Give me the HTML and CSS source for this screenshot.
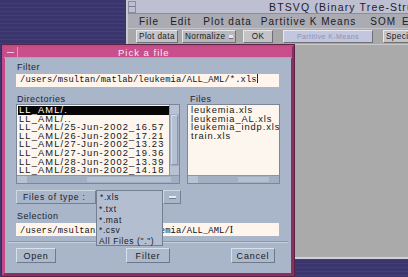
FILE: index.html
```html
<!DOCTYPE html>
<html lang="en">
<head>
    <meta charset="UTF-8">
    <title>Pick a file</title>
    <link rel="stylesheet" href="styles.css">
</head>
<body>
<div class="desk">
    <!-- back window -->
    <div class="win back">
        <div class="wtitle">
            <span class="wmenu"><i></i></span>
            <span class="wtext">BTSVQ (Binary Tree-Structured Vector Quantization)</span>
        </div>
        <div class="menubar">
            <span>File</span><span>Edit</span><span>Plot data</span><span>Partitive K Means</span><span>SOM</span><span>ETC</span>
        </div>
        <div class="toolbar">
            <span class="btn">Plot data</span>
            <span class="btn opt">Normalize <i></i></span>
            <span class="btn ok">OK</span>
            <span class="btn off">Partitive K-Means</span>
            <span class="btn">Special</span>
        </div>
        <div class="canvas"></div>
    </div>

    <!-- file dialog -->
    <div class="win dlg">
        <div class="dtitle">
            <span class="dmenu"><i></i></span>
            <span class="dtext">Pick a file</span>
        </div>
        <div class="dbody">
            <div class="lbl">Filter</div>
            <div class="field">/users/msultan/matlab/leukemia/ALL_AML/*.xls<b class="caret"></b></div>

            <div class="lists">
                <div class="col dirs">
                    <div class="lbl">Directories</div>
                    <div class="box">
                        <div class="rows">
                            <ul>
                                <li class="sel">LL_AML/.</li>
                                <li>LL_AML/..</li>
                                <li>LL_AML/25-Jun-2002_16.57</li>
                                <li>LL_AML/26-Jun-2002_17.21</li>
                                <li>LL_AML/27-Jun-2002_13.23</li>
                                <li>LL_AML/27-Jun-2002_19.36</li>
                                <li>LL_AML/28-Jun-2002_13.39</li>
                                <li>LL_AML/28-Jun-2002_14.18</li>
                            </ul>
                            <div class="vscroll"><span class="up"></span><span class="thumb"></span><span class="down"></span></div>
                        </div>
                        <div class="hscroll"><span class="left"></span><span class="thumb"></span></div>
                    </div>
                </div>
                <div class="col files">
                    <div class="lbl">Files</div>
                    <div class="box">
                        <div class="rows">
                            <ul>
                                <li>leukemia.xls</li>
                                <li>leukemia_AL.xls</li>
                                <li>leukemia_indp.xls</li>
                                <li>train.xls</li>
                            </ul>
                        </div>
                        <div class="hscroll"><span class="left"></span><span class="thumb"></span></div>
                    </div>
                </div>
            </div>

            <div class="typerow">
                <span class="typelbl">Files of type :</span>
                <span class="typesel">*.xls</span>
                <span class="typebtn"><i></i></span>
                <ul class="popup">
                    <li>*.txt</li>
                    <li>*.mat</li>
                    <li>*.csv</li>
                    <li>All Files (".")</li>
                </ul>
            </div>

            <div class="lbl sellbl">Selection</div>
            <div class="field">/users/msultan/matlab/leukemia/ALL_AML/<b class="ibeam">I</b></div>

            <div class="sep"></div>
            <div class="buttons">
                <span class="btn open">Open</span>
                <span class="btn filt">Filter</span>
                <span class="btn cancel">Cancel</span>
            </div>
        </div>
    </div>
</div>
</body>
</html>
```

FILE: styles.css
```css
html, body{
    margin: 0;
    padding: 0;
}
body{
    width: 408px;
    height: 277px;
    overflow: hidden;
    font-family: "Liberation Sans", "DejaVu Sans", sans-serif;
}
.desk{
    position: relative;
    width: 408px;
    height: 277px;
    background-color: #3a356c;
    background-image: repeating-linear-gradient(180deg, #3a356c 0, #3a356c 3px, #423d77 3px, #423d77 4px);
}
.win{
    position: absolute;
    box-sizing: border-box;
}

/* back window */
.back{
    left: 126px;
    top: 0;
    width: 300px;
    height: 259px;
    background: #aaaaaa;
    border-left: 2px solid #c8c8d4;
    border-bottom: 2px solid #d0d0dc;
    overflow: hidden;
}
.wtitle{
    height: 13px;
    display: flex;
    align-items: center;
    background: #bebfd0;
    border-bottom: 1px solid #8c8ca0;
}
.wmenu{
    width: 12px;
    height: 12px;
    box-sizing: border-box;
    border: 1px solid #8c8ca0;
    display: flex;
    align-items: center;
    justify-content: center;
}
.wmenu i{
    width: 6px;
    height: 1px;
    background: #7a7a8c;
}
.wtext{
    margin-left: 133px;
    font-size: 10.5px;
    letter-spacing: 1.15px;
    color: #1c1c2c;
    white-space: nowrap;
}
.menubar{
    height: 14px;
    display: flex;
    align-items: center;
    background: #ababb3;
    border-bottom: 1px solid #c4c4cc;
    font-size: 10px;
    letter-spacing: 1px;
    color: #202020;
    white-space: nowrap;
}
.menubar span{
    margin-left: 11px;
}
.menubar span:nth-child(3){
    margin-left: 12px;
}
.menubar span:nth-child(4){
    margin-left: 9px;
}
.menubar span:nth-child(5){
    margin-left: 14px;
}
.menubar span:nth-child(6){
    margin-left: 6px;
}
.toolbar{
    height: 15px;
    display: flex;
    align-items: center;
    padding-left: 8px;
    background: #a8a8a8;
    border-bottom: 1px solid #c8c8c8;
    white-space: nowrap;
}
.btn{
    display: inline-flex;
    align-items: center;
    height: 13px;
    padding: 0 2px;
    box-sizing: border-box;
    font-size: 8.2px;
    letter-spacing: 0.4px;
    color: #1a1a1a;
    background: #c4c4c8;
    border: 1px solid;
    border-color: #e8e8ec #6e6e74 #6e6e74 #e8e8ec;
}
.toolbar .btn:first-child{
    width: 42px;
    padding: 0 1px;
    justify-content: center;
}
.opt{
    width: 54px;
    margin-left: 4px;
    background: #b8b8bc;
}
.opt i{
    margin-left: 4px;
    width: 8px;
    height: 3px;
    background: #e8e8ec;
    border-bottom: 1px solid #6e6e74;
}
.ok{
    width: 30px;
    justify-content: center;
    margin-left: 7px;
}
.off{
    width: 90px;
    margin-left: 10px;
    justify-content: center;
    color: #8e94b4;
    background: #c2c6de;
    font-size: 7px;
}
.toolbar .btn:last-child{
    margin-left: 10px;
}
.canvas{
    height: 214px;
    background: #aaaaaa;
}

/* dialog */
.dlg{
    left: 2px;
    top: 45px;
    width: 292px;
    height: 231px;
    background: #a9b5c9;
    border: 3px solid #c24a85;
    border-right-color: #8e2e60;
    border-bottom-color: #8e2e60;
    outline: 1px solid #5a2346;
}
.dtitle{
    height: 10px;
    display: flex;
    align-items: center;
    background: #c84e8c;
    border-bottom: 1px solid #e088b8;
    margin: -1px -1px 0;
}
.dmenu{
    width: 14px;
    height: 10px;
    box-sizing: border-box;
    border-right: 1px solid #e494c0;
    display: flex;
    align-items: center;
    justify-content: center;
}
.dmenu i{
    width: 7px;
    height: 1px;
    background: #f4c8de;
}
.dtext{
    margin-left: 100px;
    font-size: 9.5px;
    letter-spacing: 1px;
    color: #f8eef4;
}
.dbody{
    padding: 4px 11px 0 11px;
    color: #1a1a24;
}
.lbl{
    font-size: 9px;
    letter-spacing: 0.5px;
    line-height: 11px;
    height: 11px;
    padding-left: 1px;
    color: #24242c;
}
.field{
    margin-top: 1px;
    height: 13px;
    width: 263px;
    box-sizing: border-box;
    background: #fff5ec;
    font-family: "Liberation Mono", "DejaVu Sans Mono", monospace;
    font-size: 8.8px;
    letter-spacing: 0.1px;
    line-height: 13px;
    padding-left: 4px;
    color: #111;
    white-space: nowrap;
    overflow: hidden;
}
.caret{
    display: inline-block;
    width: 1px;
    height: 9px;
    background: #222;
    vertical-align: -1px;
}
.ibeam{
    font-weight: normal;
    font-family: "Liberation Serif", serif;
    font-size: 10px;
}
.lists{
    display: flex;
    margin-top: 7px;
}
.col{
    display: flex;
    flex-direction: column;
}
.col .lbl{
    height: 10px;
    line-height: 10px;
}
.dirs{
    width: 165px;
}
.files{
    width: 93px;
    margin-left: 7px;
}
.files .lbl{
    padding-left: 3px;
}
.box{
    border: 1px solid #7c8698;
    background: #fdf6ef;
}
.rows{
    display: flex;
    height: 70px;
}
.rows ul{
    flex: 1;
    margin: 0;
    padding: 1px 0 0 1px;
    list-style: none;
    overflow: hidden;
}
.rows li{
    height: 8.6px;
    line-height: 8.6px;
    font-size: 9.3px;
    letter-spacing: 1.15px;
    white-space: nowrap;
    padding-left: 1px;
    color: #161616;
}
.files .rows li{
    letter-spacing: 0.9px;
    padding-left: 2px;
}
.rows li.sel{
    background: #060606;
    color: #fff;
}
.vscroll{
    width: 9px;
    background: #a2aec2;
    display: flex;
    flex-direction: column;
    border-left: 1px solid #8a96aa;
}
.vscroll .up,
.vscroll .down{
    height: 9px;
    background: #b8c2d2;
}
.vscroll .thumb{
    flex: 1;
    margin: 1px;
    background: #b4bfd0;
    border: 1px solid;
    border-color: #d2dae6 #8a96aa #8a96aa #d2dae6;
}
.hscroll{
    height: 7px;
    display: flex;
    background: #a2aec2;
    border-top: 1px solid #8a96aa;
}
.hscroll .left{
    width: 10px;
    background: #b8c2d2;
}
.hscroll .thumb{
    flex: 1;
    margin: 1px 8px 1px 60px;
    background: #b4bfd0;
}
.files .hscroll .thumb{
    margin-left: 40px;
    margin-right: 10px;
}
.typerow{
    position: relative;
    display: flex;
    margin-top: 6px;
    height: 14px;
}
.typelbl{
    width: 80px;
    box-sizing: border-box;
    border: 1px solid;
    border-color: #d0d8e4 #74808f #74808f #d0d8e4;
    font-size: 8.5px;
    letter-spacing: 0.8px;
    line-height: 12px;
    padding-left: 6px;
    white-space: nowrap;
}
.typesel{
    width: 67px;
    box-sizing: border-box;
    border: 1px solid #74808f;
    border-bottom: none;
    background: #b3bfd1;
    font-size: 8.5px;
    letter-spacing: 0.6px;
    line-height: 12px;
    padding-left: 3px;
}
.typebtn{
    width: 18px;
    box-sizing: border-box;
    border: 1px solid;
    border-color: #d0d8e4 #74808f #74808f #d0d8e4;
    display: flex;
    align-items: center;
    justify-content: center;
}
.typebtn i{
    width: 7px;
    height: 2px;
    background: #e4eaf2;
    border-bottom: 1px solid #74808f;
}
.popup{
    position: absolute;
    z-index: 5;
    left: 80px;
    top: 13px;
    width: 67px;
    height: 43px;
    box-sizing: border-box;
    margin: 0;
    padding: 1px 0 0 2px;
    list-style: none;
    background: #b3bfd1;
    border: 1px solid #74808f;
    border-top: none;
}
.popup li{
    height: 10.5px;
    line-height: 10.5px;
    font-size: 8.5px;
    letter-spacing: 0.6px;
    white-space: nowrap;
}
.sellbl{
    margin-top: 7px;
}
.sep{
    margin: 5px -8px 0;
    height: 0;
    border-top: 1px solid #8a96aa;
    border-bottom: 1px solid #c6d0de;
}
.buttons{
    display: flex;
    margin-top: 5px;
}
.buttons .btn{
    height: 15px;
    font-size: 9px;
    letter-spacing: 0.8px;
    background: #adb9cc;
    border-color: #d8e0ea #6e7a8c #6e7a8c #d8e0ea;
    justify-content: center;
}
.open{
    width: 40px;
}
.filt{
    width: 44px;
    margin-left: 70px;
}
.cancel{
    width: 44px;
    margin-left: 61px;
}
```
